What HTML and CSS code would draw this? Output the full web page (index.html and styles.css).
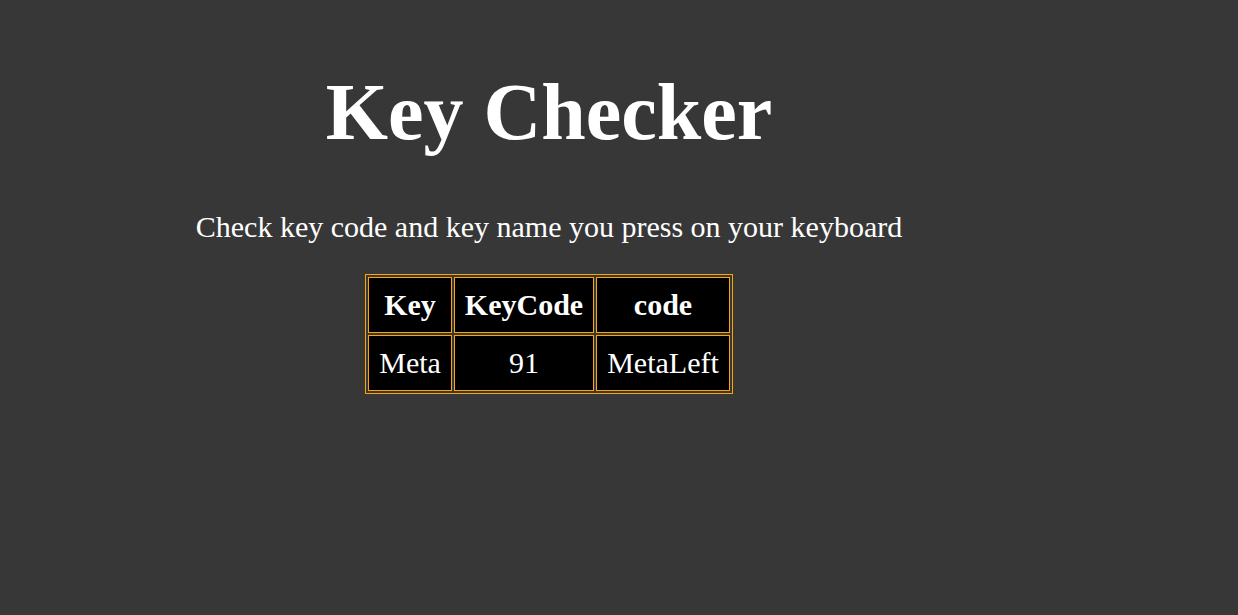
FILE: index.html
```html
<!DOCTYPE html>
<html lang="en">
<head>
<meta charset="utf-8">
<title>Key Checker</title>
<link rel="stylesheet" href="styles.css">
</head>
<body>
<main class="page">
  <h1 class="title">Key Checker</h1>
  <p class="subtitle">Check key code and key name you press on your keyboard</p>
  <table class="keys">
    <thead>
      <tr><th>Key</th><th>KeyCode</th><th>code</th></tr>
    </thead>
    <tbody>
      <tr><td>Meta</td><td>91</td><td>MetaLeft</td></tr>
    </tbody>
  </table>
</main>
</body>
</html>
```

FILE: styles.css
```css
html, body {
  margin: 0;
  padding: 0;
  background: #373737;
}
body {
  font-family: "Liberation Serif", "Times New Roman", serif;
  color: #ffffff;
}
.page {
  width: 1098px;
  padding-top: 66px;
  text-align: center;
}
.title {
  margin: 0;
  font-size: 80px;
  font-weight: bold;
  line-height: 92px;
}
.subtitle {
  margin: 52px 0 0;
  font-size: 30px;
  line-height: 34px;
}
.keys {
  margin: 30px auto 0;
  border: 1px solid #ffa500;
  border-spacing: 2px;
  background: transparent;
}
.keys th, .keys td {
  border: 1px solid #ffa500;
  background: #000000;
  padding: 10px;
  font-size: 30px;
  line-height: 34px;
  text-align: center;
}
.keys th { font-weight: bold; }
.keys td { font-weight: normal; }
```
